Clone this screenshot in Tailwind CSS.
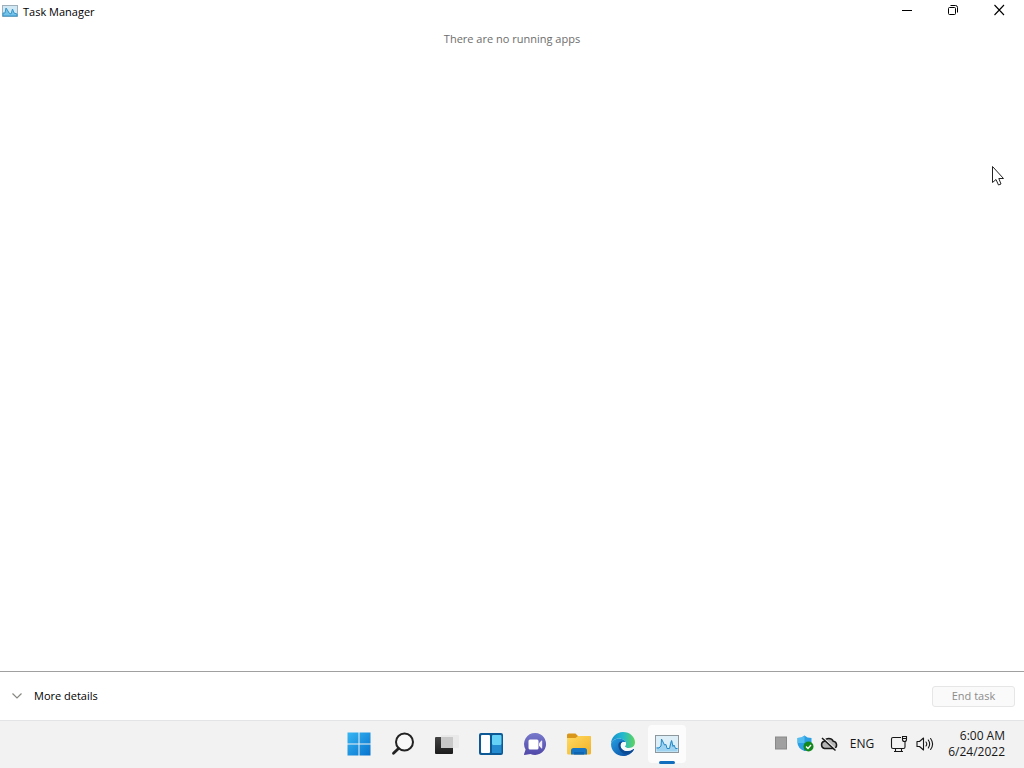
<!DOCTYPE html>
<html lang="en">
<head>
<meta charset="utf-8">
<meta name="viewport" content="width=device-width, initial-scale=1">
<title>Task Manager</title>
<script src="https://cdn.jsdelivr.net/npm/@tailwindcss/browser@4"></script>
</head>
<body class="relative flex h-screen flex-col overflow-hidden bg-white font-['Open_Sans','Noto_Sans',sans-serif] text-[11px] leading-4 text-black">

<header class="flex h-6 shrink-0 items-start justify-between">
  <div class="flex items-center gap-[5px] pt-1 pl-0.5">
    <svg class="h-4 w-4" viewBox="0 0 16 16" fill="none">
      <rect x="0.5" y="1.5" width="15" height="11" fill="#cfe8f4" stroke="#9fb0ba"/>
      <path d="M1 12V9L3 9L4 4L6 7L7 9L9 10L10.500 5L12 9L15 10V12Z" fill="#74c2e8" stroke="#3595cb"/>
    </svg>
    <h1>Task Manager</h1>
  </div>
  <div class="flex">
    <button aria-label="Minimize" class="flex h-5 w-[46px] items-center justify-center">
      <svg class="h-3 w-3" viewBox="0 0 12 12" stroke="#000"><path d="M1 6.500H11"/></svg>
    </button>
    <button aria-label="Restore" class="flex h-5 w-[46px] items-center justify-center">
      <svg class="h-3 w-3" viewBox="0 0 12 12" fill="none" stroke="#000"><rect x="1.500" y="3.500" width="7" height="7" rx="1"/><path d="M3.500 1.500H8.500Q10.500 1.500 10.500 3.500V8.500"/></svg>
    </button>
    <button aria-label="Close" class="flex h-5 w-[48px] items-center justify-center">
      <svg class="h-3 w-3" viewBox="0 0 12 12" stroke="#000" stroke-width="1.100"><path d="M0.500 1L10 11M10 1L0.500 11"/></svg>
    </button>
  </div>
</header>

<main class="flex-1 pt-[7px] text-center text-[#6d6d6d]">
  <p>There are no running apps</p>
</main>

<footer class="flex h-[49px] shrink-0 items-center justify-between border-t border-[#a0a0a0] pr-[9px] pl-3">
  <button class="flex items-center gap-3">
    <svg class="h-[10px] w-[10px]" viewBox="0 0 10 10" fill="none" stroke="#888880" stroke-width="1.200"><path d="M0.500 2.500L5 7L9.500 2.500"/></svg>
    <span>More details</span>
  </button>
  <button disabled class="flex h-[21px] w-[83px] items-center justify-center rounded-[3px] border border-[#e6e6e6] bg-[#fafafa] text-[#8c8c8c]">End task</button>
</footer>

<nav aria-label="Taskbar" class="grid h-12 shrink-0 grid-cols-[1fr_auto_1fr] items-center border-t border-[#e3e4e6] bg-[#f2f2f2] pb-0.5">
  <div></div>
  <div class="flex h-full items-center pl-0.5">
    <button aria-label="Start" class="flex h-10 w-11 items-center justify-center">
      <svg class="h-6 w-6" viewBox="0 0 24 24">
        <defs><linearGradient id="win" x1="0" y1="0" x2="24" y2="24" gradientUnits="userSpaceOnUse"><stop stop-color="#38b8f4"/><stop offset="1" stop-color="#0671cc"/></linearGradient></defs>
        <path fill="url(#win)" d="M0.500 0.500H11.500V11.500H0.500ZM12.500 0.500H23.500V11.500H12.500ZM0.500 12.500H11.500V23.500H0.500ZM12.500 12.500H23.500V23.500H12.500Z"/>
      </svg>
    </button>
    <button aria-label="Search" class="flex h-10 w-11 items-center justify-center">
      <svg class="h-6 w-6" viewBox="0 0 24 24" fill="none" stroke="#222"><circle cx="13.500" cy="10" r="8.500" fill="#f8f8f8" stroke-width="2"/><path d="M7.500 16.500L2.500 21.300" stroke-width="2.800" stroke-linecap="round"/></svg>
    </button>
    <button aria-label="Task view" class="flex h-10 w-11 items-center justify-center">
      <svg class="h-6 w-6" viewBox="0 0 24 24">
        <defs><linearGradient id="tv" x2="0" y2="1"><stop stop-color="#444"/><stop offset="1" stop-color="#1b1b1b"/></linearGradient></defs>
        <rect x="0" y="5" width="18" height="17" rx="1" fill="url(#tv)"/><rect x="6" y="3" width="18" height="13" rx="1" fill="#e9e9e9"/><rect x="6" y="5" width="12" height="11" fill="#c8c8c8"/>
      </svg>
    </button>
    <button aria-label="Widgets" class="flex h-10 w-11 items-center justify-center">
      <svg class="h-6 w-6" viewBox="0 0 24 24">
        <rect x="0" y="1" width="24" height="22" rx="2" fill="#0c5995"/><rect x="2" y="3" width="9" height="18" rx="1" fill="#fcfeff"/><rect x="13" y="3" width="9.500" height="10" rx="1" fill="#66d1f6"/><rect x="13" y="13" width="9.500" height="8" fill="#258bd0"/>
      </svg>
    </button>
    <button aria-label="Chat" class="flex h-10 w-11 items-center justify-center">
      <svg class="h-6 w-6" viewBox="0 0 24 24">
        <defs><linearGradient id="chat" x2="0" y2="1"><stop stop-color="#7779cc"/><stop offset="1" stop-color="#5148a8"/></linearGradient></defs>
        <path fill="url(#chat)" d="M12.500 1A11 11 0 1 1 7.500 22L1.500 23Q0.800 23 1 22.300L2.600 17.500A11 11 0 0 1 12.500 1Z"/>
        <rect x="5.500" y="7.500" width="10" height="10" rx="1.500" fill="#fff"/><path d="M16 11.300L18.500 8.500Q19.200 8.100 19.200 9V16Q19.200 16.900 18.500 16.500L16 13.800Z" fill="#f1effd"/>
      </svg>
    </button>
    <button aria-label="File Explorer" class="flex h-10 w-11 items-center justify-center">
      <svg class="h-6 w-6" viewBox="0 0 24 24">
        <defs><linearGradient id="fold" x2="1" y2="1"><stop stop-color="#ffda62"/><stop offset="1" stop-color="#f2b126"/></linearGradient></defs>
        <path d="M0 3Q0 1.500 1.500 1.500H8.500L11 4H22.500Q24 4 24 5.500V9H0Z" fill="#d8961b"/>
        <path d="M0 6H8.500L11 4H22.500Q24 4 24 5.500V21Q24 22.500 22.500 22.500H1.500Q0 22.500 0 21Z" fill="url(#fold)"/>
        <path d="M4 22.500V18.500Q4 16 6.500 16H17.500Q20 16 20 18.500V22.500Z" fill="#1675c5"/><path d="M7 20H17V22.500H7Z" fill="#0f64b0"/>
      </svg>
    </button>
    <button aria-label="Microsoft Edge" class="flex h-10 w-11 items-center justify-center">
      <svg class="h-6 w-6" viewBox="0 0 24 24">
        <defs>
          <linearGradient id="e1" x1="0" y1="8" x2="24" y2="8" gradientUnits="userSpaceOnUse"><stop stop-color="#168fd0"/><stop offset=".5" stop-color="#24b9ce"/><stop offset="1" stop-color="#5ed45c"/></linearGradient>
          <linearGradient id="e2" x1="0" y1="8" x2="16" y2="24" gradientUnits="userSpaceOnUse"><stop stop-color="#249ee0"/><stop offset="1" stop-color="#0b4fa4"/></linearGradient>
        </defs>
        <path fill="url(#e1)" d="M0 12C0 5 5.500 0 12 0C19 0 24 5 24 10.300C24 14 21.300 16 18 16C15.500 16 14 15.200 14 14.400C14 13.800 15 13.300 15 11.800C15 9 11.800 6.500 8 6.500C4 6.500 0.700 8.800 0 12Z"/>
        <path fill="url(#e2)" d="M0 12C0.700 8.800 4 6.500 8 6.500C11.500 6.500 14.200 8.200 14.900 10.500C12 9.200 9.700 11 9.700 13.500C9.700 17 13 19 16.500 19C19 19 20.800 18 22.300 17C22.900 16.700 23.200 17.100 22.800 17.700C20.500 21.700 16.500 24 12 24C5.400 24 0 18.600 0 12Z"/>
        <path fill="#0c4a94" d="M7.300 13C7.300 10.800 9 9 11.500 9.500C10.300 10.300 9.700 11.800 9.700 13.500C9.700 17 13 19 16.500 19C19 19 20.800 18 22.300 17C22.900 16.700 23.200 17.100 22.800 17.700C21 20.700 18.500 22 15.500 22C10.500 22 7.300 17.500 7.300 13Z"/>
        <path fill="#f7f9fb" d="M14.900 10.500C12 9.200 9.700 11 9.700 13.500C9.700 17 13 19 16.500 19C19 19 20.800 18 22.300 17L23 15C21.500 16 20 16.200 18 16.200C15.500 16 14 15.200 14 14.400C14 13.800 15.300 12.500 14.900 10.500Z"/>
      </svg>
    </button>
    <button aria-label="Task Manager" class="relative flex h-10 w-11 items-center justify-center">
      <span class="flex h-[38px] w-[38px] items-center justify-center rounded bg-[#fcfcfc]">
        <svg class="h-6 w-6" viewBox="0 0 24 24">
          <rect x="0.500" y="3.500" width="23" height="17" fill="#dceef7" stroke="#8d989e"/><path d="M1.500 19.500V15H4L6 13V7.500L8 9L9 12L11 13V15L14 17L15 10L17.500 8.500L18.500 14L21 16H22.500V19.500Z" fill="#9dd3f1"/><path d="M1.500 16H4L6 14L6.500 7L8 10L9.500 13L11 12.500L12 16.500H14.500L16.500 8.500L18 14.500L19 13L20.500 16.500H22.500" fill="none" stroke="#2689c6"/>
        </svg>
      </span>
      <span class="absolute bottom-0 left-1/2 h-[3px] w-4 -translate-x-1/2 rounded-full bg-[#106ebd]"></span>
    </button>
  </div>

  <div class="flex items-center justify-end pr-[19px] text-[12px] text-[#161616]">
    <button aria-label="Action flag" class="mr-2.5 flex">
      <svg class="h-4 w-3" viewBox="0 0 12 16"><rect x="0.500" y="1" width="11" height="12" fill="#a0a0a0" stroke="#898989"/></svg>
    </button>
    <button aria-label="Windows Security" class="mr-1.5 flex">
      <svg class="h-[17px] w-[17px]" viewBox="0 0 17 17">
        <path fill="#2b9fe2" d="M7.500 0.500Q10 3 14.500 3V8Q14.500 13 7.500 16Q0.500 13 0.500 8V3Q5 3 7.500 0.500Z"/><path fill="#54bdf0" d="M7.500 0.500V8H0.500V3Q5 3 7.500 0.500Z"/><path fill="#1477c9" d="M7.500 8H14.500Q14.500 13 7.500 16Z"/>
        <circle cx="11.500" cy="11.500" r="5" fill="#13891d"/><path d="M9 11.500L11 13.500L14 10" fill="none" stroke="#fff" stroke-width="1.300"/>
      </svg>
    </button>
    <button aria-label="OneDrive" class="mr-3 flex">
      <svg class="h-4 w-[18px]" viewBox="0 0 18 16" fill="none" stroke="#191919">
        <path d="M4.500 12.500A3.700 3.700 0 0 1 4.300 5.300A5 5 0 0 1 13.300 5.300A3.700 3.700 0 0 1 14 12.500Z" fill="#b5b5b5" stroke-width="1.500"/><path d="M3.500 2L16.500 14" stroke="#f2f2f2" stroke-width="1.500"/><path d="M2 2L15.500 14.500" stroke-width="1.500"/>
      </svg>
    </button>
    <button aria-label="Input language" class="mr-4">ENG</button>
    <button aria-label="Network" class="mr-2 flex">
      <svg class="h-[18px] w-[18px]" viewBox="0 0 18 18" fill="none" stroke="#171717" stroke-width="1.100"><path d="M11 2.500H3Q1.500 2.500 1.500 4V12Q1.500 13.500 3 13.500H13.500Q15 13.500 15 12V8M5.500 13.500V16.500M11.500 13.500V16.500M4 16.500H13M15 6V9"/><path d="M12.500 1.500H16.500V4.500Q16.500 6.500 14.500 6.500Q12.500 6.500 12.500 4.500ZM12.500 3.500H16.500"/></svg>
    </button>
    <button aria-label="Volume" class="mr-3.5 flex">
      <svg class="h-4 w-[18px]" viewBox="0 0 18 16" fill="none" stroke="#171717" stroke-width="1.100" stroke-linejoin="round" stroke-linecap="round"><path d="M1 5.500H3.500L7.500 2V14L3.500 10.500H1ZM10 6Q11.500 8 10 10M12.300 4Q15 8 12.300 12M14.600 2.500Q18.600 8 14.600 13.500"/></svg>
    </button>
    <button class="text-right"><time datetime="2022-06-24T06:00" class="block">6:00 AM<br>6/24/2022</time></button>
  </div>
</nav>

<svg class="pointer-events-none absolute top-[165px] left-[991px] h-[22px] w-[14px]" viewBox="0 0 14 22"><path d="M1.500 1.500V17.500L5 14.500L7.500 20L10 19L7.800 13.500H12.500Z" fill="#fff" stroke="#222" stroke-linejoin="round"/></svg>
</body>
</html>
